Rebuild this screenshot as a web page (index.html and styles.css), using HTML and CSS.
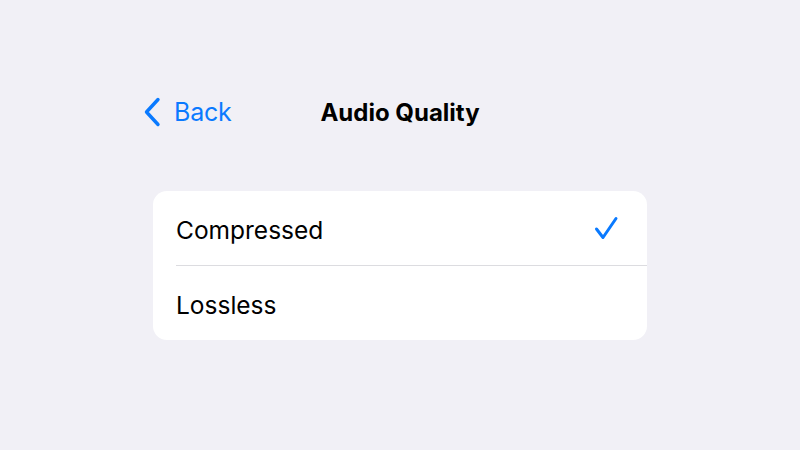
FILE: index.html
```html
<!DOCTYPE html>
<html>
<head>
<meta charset="utf-8">
<link rel="stylesheet" href="styles.css">
</head>
<body>
<div class="page">
  <div class="nav">
    <div class="back">
      <svg class="chev" width="18" height="30" viewBox="0 0 18 30"><path d="M15 2.5 L3.5 15 L15 27.5" fill="none" stroke="#0a7aff" stroke-width="3.4" stroke-linecap="round" stroke-linejoin="round"/></svg>
      <span class="back-label">Back</span>
    </div>
    <div class="title">Audio Quality</div>
  </div>
  <div class="card">
    <div class="row">
      <span class="label">Compressed</span>
      <svg class="check" width="26" height="24" viewBox="0 0 26 24"><path d="M3.5 13 L10 21.5 L23 2.5" fill="none" stroke="#0a7aff" stroke-width="3" stroke-linecap="round" stroke-linejoin="round"/></svg>
    </div>
    <div class="sep"></div>
    <div class="row">
      <span class="label">Lossless</span>
    </div>
  </div>
</div>
</body>
</html>
```
FILE: styles.css
```css
html, body {
  margin: 0;
  padding: 0;
  background: #f1f0f6;
  font-family: Inter, "Noto Sans", sans-serif;
}
.page {
  width: 800px;
  height: 450px;
  display: flex;
  flex-direction: column;
  align-items: center;
}
.nav {
  width: 800px;
  height: 40px;
  margin-top: 92px;
  position: relative;
  display: flex;
  align-items: center;
  justify-content: center;
}
.back {
  position: absolute;
  left: 143px;
  top: 5px;
  display: flex;
  align-items: center;
  gap: 13px;
  color: #0a7aff;
}
.back-label {
  font-size: 25px;
  letter-spacing: -0.2px;
}
.title {
  font-size: 24px;
  font-weight: 700;
  color: #000;
  letter-spacing: 0;
}
.card {
  margin-top: 59px;
  width: 494px;
  background: #fff;
  border-radius: 14px;
  padding-left: 23px;
  box-sizing: border-box;
}
.row {
  height: 74px;
  box-sizing: border-box;
  padding-top: 3px;
  display: flex;
  align-items: center;
  justify-content: space-between;
  padding-right: 28px;
}
.check {
  margin-top: -3px;
}
.label {
  font-size: 24.5px;
  color: #000;
  letter-spacing: 0;
}
.sep {
  height: 1px;
  background: #dcdce0;
}
```
